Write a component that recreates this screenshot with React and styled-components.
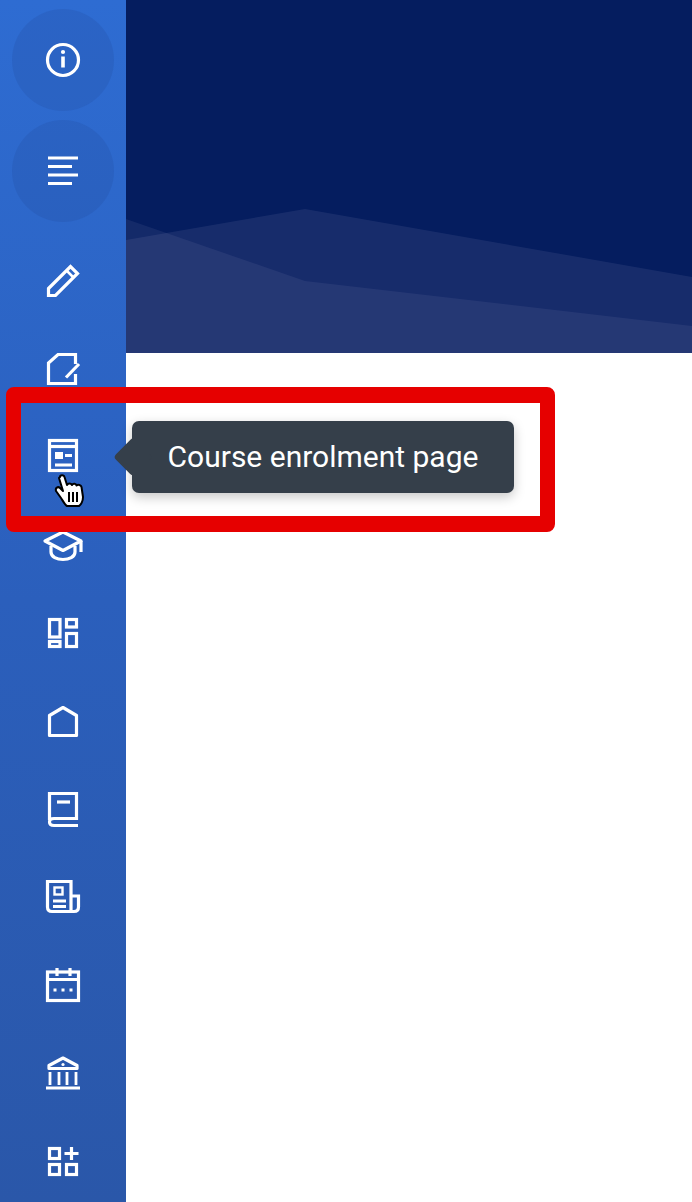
import React from "react";
import styled, { createGlobalStyle } from "styled-components";

const Global = createGlobalStyle`
  html, body { margin: 0; padding: 0; background: #fff; }
  body { font-family: Roboto, "Liberation Sans", sans-serif; }
`;

const Page = styled.div`
  position: relative;
  display: flex;
  width: 692px;
  height: 1202px;
  overflow: hidden;
  background: #fff;
`;

const Sidebar = styled.nav`
  flex: 0 0 126px;
  display: flex;
  flex-direction: column;
  align-items: stretch;
  padding-top: 9px;
  box-sizing: border-box;
  background: linear-gradient(180deg, #2e6cd2 0%, #2b5fbc 50%, #2a57a9 100%);
`;

const RoundItem = styled.div`
  flex: 0 0 102px;
  margin: 0 12px 9px;
  border-radius: 50%;
  display: flex;
  align-items: center;
  justify-content: center;
  background: rgba(30, 60, 130, 0.14);
  &:nth-child(2) { margin-bottom: 15px; }
`;

const Item = styled.div`
  position: relative;
  flex: 0 0 88px;
  display: flex;
  align-items: center;
  justify-content: center;
`;

const Glyph = styled.svg.attrs({ viewBox: "-22 -22 44 44", width: 44, height: 44 })`
  display: block;
  fill: none;
  stroke: #fff;
  stroke-width: 3.2;
`;

const Main = styled.main`
  flex: 1;
  display: flex;
  flex-direction: column;
`;

const Banner = styled.header`
  height: 353px;
  background: #051d5f;
`;

const Waves = styled.svg.attrs({ viewBox: "126 0 566 353", width: 566, height: 353 })`
  display: block;
`;

const Tooltip = styled.div`
  position: absolute;
  left: 132px;
  top: 8px;
  width: 382px;
  height: 72px;
  box-sizing: border-box;
  padding-bottom: 2px;
  display: flex;
  align-items: center;
  justify-content: center;
  border-radius: 7px;
  background: #353f4a;
  color: #fff;
  font-size: 30px;
  white-space: nowrap;
  box-shadow: 0 4px 12px rgba(0, 0, 0, 0.22);
  z-index: 3;
  &::before {
    content: "";
    position: absolute;
    left: -13px;
    top: 22px;
    width: 28px;
    height: 28px;
    border-radius: 4px;
    background: #353f4a;
    transform: rotate(45deg);
  }
`;

const TipLabel = styled.span`
  position: relative;
`;

const Cursor = styled.svg.attrs({ viewBox: "0 0 32 36", width: 32, height: 36 })`
  position: absolute;
  left: 54px;
  top: 60px;
  z-index: 4;
`;

const Annotation = styled.div`
  position: absolute;
  left: 6px;
  top: 387px;
  width: 549px;
  height: 145px;
  box-sizing: border-box;
  border: 15px solid #e60000;
  border-top-width: 16px;
  border-bottom-width: 16px;
  border-radius: 8px;
  z-index: 2;
  pointer-events: none;
`;

const sq = (x, y, w, h) => <rect x={x} y={y} width={w} height={h} />;

export default function App() {
  return (
    <Page>
      <Global />
      <Sidebar>
        <RoundItem>
          <Glyph>
            <circle r="15.5" />
            <circle cy="-8" r="2.1" fill="#fff" stroke="none" />
            <path d="M0 -3.5V7.5" strokeWidth="3.6" />
          </Glyph>
        </RoundItem>
        <RoundItem>
          <Glyph>
            <path d="M-15 -13H15M-15 -4.5H9M-15 4H15M-15 12.5H9" />
          </Glyph>
        </RoundItem>
        <Item>
          <Glyph>
            <path d="M-14.5 14.5V7.5L7.5 -14.5L14.5 -7.5L-7.5 14.5Z" />
            <path d="M3.5 -10.5L10.5 -3.5" strokeWidth="2.5" />
          </Glyph>
        </Item>
        <Item>
          <Glyph>
            <path d="M12.5 5V14.5H-14.5V-6L-5 -14.5H12.5V-5" />
            <path d="M3 8.5L16 -5" />
          </Glyph>
        </Item>
        <Item>
          <Glyph>
            <rect x="-13.5" y="-16.5" width="27" height="30" />
            <path d="M-13.5 -10.5H13.5" />
            <rect x="-8" y="-5" width="8" height="7" fill="#fff" stroke="none" />
            <path d="M2 -1.5H9M-8 8H9" />
          </Glyph>
          <Tooltip>
            <TipLabel>Course enrolment page</TipLabel>
          </Tooltip>
          <Cursor>
            <path
              d="M6 4C6 1.5 10 1.5 10.5 4L13 12C14 10 17 10 18 12C19 10 22 10.5 22.5 12.5C24 11 27 12 27.5 14L29 24C29 28 27 32 25 33H13C11 32 9 28 7 25L2 18C1 15 4 13 6 15L9 18L5 5Z"
              fill="#fff"
              stroke="#000"
              strokeWidth="2"
              strokeLinejoin="round"
            />
            <path d="M15 19V29M19 19V29M23 19V29" stroke="#000" strokeWidth="2" fill="none" />
          </Cursor>
        </Item>
        <Item>
          <Glyph>
            <path d="M0 -13L-18 -4L0 5.5L18 -4Z" strokeLinejoin="round" />
            <path d="M-12 1V7C-12 12 -6 14.5 0 14.5C6 14.5 12 12 12 7V1M18 -4V7" />
          </Glyph>
        </Item>
        <Item>
          <Glyph>
            {sq(-13.5, -13.5, 10.5, 17.5)}
            {sq(-13.5, 8.5, 10.5, 5)}
            {sq(3.5, -13.5, 10, 7.5)}
            {sq(3.5, 0.5, 10, 13)}
          </Glyph>
        </Item>
        <Item>
          <Glyph>
            <path d="M-13.5 14.5V-5.5L0 -13.5L13.5 -5.5V14.5Z" strokeLinejoin="round" />
          </Glyph>
        </Item>
        <Item>
          <Glyph>
            <path d="M-13.5 11V-15.5H13.5V9.5H-9Q-13.5 9.5 -13.5 13Q-13.5 16.5 -9 16.5H15" />
            <path d="M-6 -7H7" />
          </Glyph>
        </Item>
        <Item>
          <Glyph>
            <path d="M8 14.5H-11Q-15.5 14.5 -15.5 10V-15.5H8ZM8 -1H15.5V10Q15.5 14.5 11 14.5H8" />
            <rect x="-8.5" y="-9.5" width="8" height="7" strokeWidth="2.4" />
            <path d="M-10 4H3M-10 9.5H3" strokeWidth="2.8" />
          </Glyph>
        </Item>
        <Item>
          <Glyph>
            <rect x="-15.5" y="-13" width="31" height="28.5" />
            <path d="M-15.5 -5.5H15.5M-6 -17V-9M7 -17V-9" />
            <path d="M-9.5 5H-6.5M-1.5 5H1.5M6.5 5H9.5" />
          </Glyph>
        </Item>
        <Item>
          <Glyph>
            <path d="M0 -15L-14 -7.5V-4.5H14V-7.5Z" strokeLinejoin="round" />
            <circle cy="-8.5" r="1.6" fill="#fff" stroke="none" />
            <path d="M-13 -1V12M-4 -1V12M4 -1V12M13 -1V12" strokeWidth="2.8" />
            <path d="M-17 15H17" />
          </Glyph>
        </Item>
        <Item>
          <Glyph>
            {sq(-13.5, -12.5, 10, 10)}
            {sq(-13.5, 3.5, 10, 10)}
            {sq(3.5, 3.5, 10, 10)}
            <path d="M8.5 -14V-1M1.5 -7.5H15.5" />
          </Glyph>
        </Item>
      </Sidebar>
      <Main>
        <Banner>
          <Waves>
            <polygon points="126,240 305,209 692,277 692,353 126,353" fill="#f4e8ff" fillOpacity="0.08" />
            <polygon points="126,219 305,281 692,326 692,353 126,353" fill="#f4e8ff" fillOpacity="0.065" />
          </Waves>
        </Banner>
      </Main>
      <Annotation />
    </Page>
  );
}
